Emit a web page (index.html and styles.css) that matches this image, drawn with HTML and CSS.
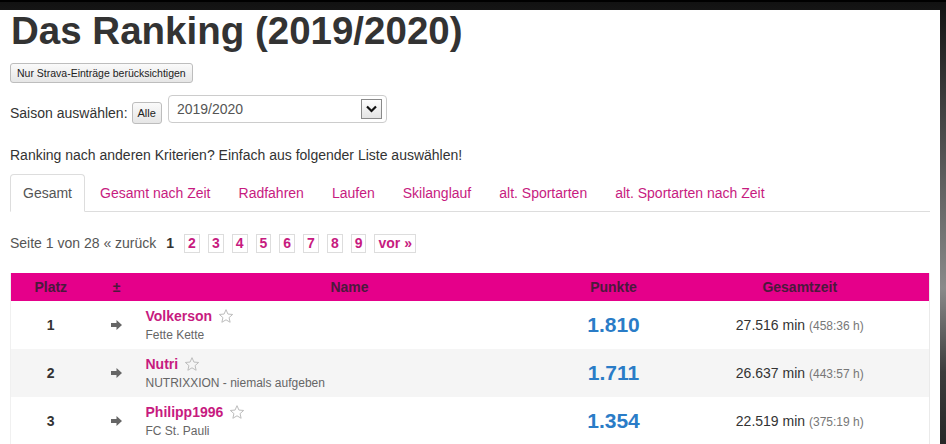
FILE: index.html
```html
<!DOCTYPE html>
<html>
<head>
    <title>Das Ranking (2019/2020)</title>
    <meta charset="utf-8">
    <link rel="stylesheet" href="styles.css">
</head>
<body>
    <div class="page">
        <h1>Das Ranking (2019/2020)</h1>

        <button class="btn-small btn-strava">Nur Strava-Einträge berücksichtigen</button>

        <!-- Saison-Auswahl -->
        <div class="season-row">
            <span class="season-label">Saison auswählen:</span>
            <button class="btn-small btn-alle">Alle</button>
            <div class="select">
                <span class="select-value">2019/2020</span>
                <span class="select-arrow">
                    <svg width="19" height="18" viewBox="0 0 19 18"><path d="M5 6.5 L9.5 11 L14 6.5" fill="none" stroke="#111" stroke-width="2.2"/></svg>
                </span>
            </div>
        </div>

        <p class="hint">Ranking nach anderen Kriterien? Einfach aus folgender Liste auswählen!</p>

        <!-- Tabs -->
        <ul class="tabs">
            <li class="active"><a href="#">Gesamt</a></li>
            <li><a href="#">Gesamt nach Zeit</a></li>
            <li><a href="#">Radfahren</a></li>
            <li><a href="#">Laufen</a></li>
            <li><a href="#">Skilanglauf</a></li>
            <li><a href="#">alt. Sportarten</a></li>
            <li><a href="#">alt. Sportarten nach Zeit</a></li>
        </ul>

        <!-- Seiten -->
        <div class="pager">
            <span class="pager-info">Seite 1 von 28 « zurück</span>
            <span class="pager-current">1</span>
            <a class="pager-link" href="#">2</a>
            <a class="pager-link" href="#">3</a>
            <a class="pager-link" href="#">4</a>
            <a class="pager-link" href="#">5</a>
            <a class="pager-link" href="#">6</a>
            <a class="pager-link" href="#">7</a>
            <a class="pager-link" href="#">8</a>
            <a class="pager-link" href="#">9</a>
            <a class="pager-link" href="#">vor »</a>
        </div>

        <!-- Rangliste -->
        <table class="ranking">
            <colgroup>
                <col class="col-platz">
                <col class="col-diff">
                <col class="col-name">
                <col class="col-punkte">
                <col>
            </colgroup>
            <thead>
                <tr>
                    <th>Platz</th>
                    <th>±</th>
                    <th>Name</th>
                    <th>Punkte</th>
                    <th>Gesamtzeit</th>
                </tr>
            </thead>
            <tbody>
                <tr>
                    <td class="rank">1</td>
                    <td class="diff"><svg class="arrow" width="11" height="10" viewBox="0 0 11 10"><path d="M0 3 H5.5 V0 L11 5 L5.5 10 V7 H0 Z" fill="#666"/></svg></td>
                    <td class="name">
                        <div class="name-line"><a href="#">Volkerson</a><svg class="star" width="16" height="16" viewBox="0 0 24 24"><path d="M12 2.5l2.9 6.6 7.1.6-5.4 4.7 1.6 7-6.2-3.7-6.2 3.7 1.6-7L2 9.7l7.1-.6z" fill="none" stroke="#bdbdbd" stroke-width="1.5" stroke-linejoin="round"/></svg></div>
                        <div class="team">Fette Kette</div>
                    </td>
                    <td class="points">1.810</td>
                    <td class="time">27.516 min <small>(458:36 h)</small></td>
                </tr>
                <tr>
                    <td class="rank">2</td>
                    <td class="diff"><svg class="arrow" width="11" height="10" viewBox="0 0 11 10"><path d="M0 3 H5.5 V0 L11 5 L5.5 10 V7 H0 Z" fill="#666"/></svg></td>
                    <td class="name">
                        <div class="name-line"><a href="#">Nutri</a><svg class="star" width="16" height="16" viewBox="0 0 24 24"><path d="M12 2.5l2.9 6.6 7.1.6-5.4 4.7 1.6 7-6.2-3.7-6.2 3.7 1.6-7L2 9.7l7.1-.6z" fill="none" stroke="#bdbdbd" stroke-width="1.5" stroke-linejoin="round"/></svg></div>
                        <div class="team">NUTRIXXION - niemals aufgeben</div>
                    </td>
                    <td class="points">1.711</td>
                    <td class="time">26.637 min <small>(443:57 h)</small></td>
                </tr>
                <tr>
                    <td class="rank">3</td>
                    <td class="diff"><svg class="arrow" width="11" height="10" viewBox="0 0 11 10"><path d="M0 3 H5.5 V0 L11 5 L5.5 10 V7 H0 Z" fill="#666"/></svg></td>
                    <td class="name">
                        <div class="name-line"><a href="#">Philipp1996</a><svg class="star" width="16" height="16" viewBox="0 0 24 24"><path d="M12 2.5l2.9 6.6 7.1.6-5.4 4.7 1.6 7-6.2-3.7-6.2 3.7 1.6-7L2 9.7l7.1-.6z" fill="none" stroke="#bdbdbd" stroke-width="1.5" stroke-linejoin="round"/></svg></div>
                        <div class="team">FC St. Pauli</div>
                    </td>
                    <td class="points">1.354</td>
                    <td class="time">22.519 min <small>(375:19 h)</small></td>
                </tr>
            </tbody>
        </table>
    </div>
</body>
</html>
```

FILE: styles.css
```css
/* Grundlayout */
body {
    margin: 0;
    font-family: "Liberation Sans", Arial, sans-serif;
    font-size: 14px;
    line-height: 20px;
    color: #333;
    background: linear-gradient(180deg, #111 0, #3a3a3a 20%, #6a6a6a 45%, #8a8a8a 62%, #3c3c3c 80%, #222 100%);
    border-top: 2px solid #000;
    min-height: 100vh;
    box-sizing: border-box;
}
.page {
    width: 940px;
    box-sizing: border-box;
    padding: 0 10px 20px;
    background: #fff;
    min-height: 442px;
}
h1 {
    margin: 8px 0 0 1px;
    font-size: 38.5px;
    line-height: 42px;
    font-weight: bold;
    color: #333;
}

/* Buttons */
.btn-small {
    display: block;
    margin-top: 11px;
    padding: 2px 6px;
    font-family: inherit;
    font-size: 11px;
    line-height: 14px;
    color: #222;
    background: linear-gradient(#fafafa, #e6e6e6);
    border: 1px solid #bdbdbd;
    border-radius: 3px;
}
.btn-strava {
    font-size: 10.5px;
}

/* Saison */
.season-row {
    display: flex;
    align-items: flex-end;
    margin-top: 12px;
    height: 29px;
}
.season-label {
    padding-bottom: 1px;
}
.btn-alle {
    margin: 0 0 0 4px;
    padding: 3px 5px;
}
.select {
    display: flex;
    align-items: center;
    justify-content: space-between;
    width: 219px;
    height: 28px;
    box-sizing: border-box;
    margin: 0 0 1px 6px;
    padding: 0 4px 0 8px;
    border: 1px solid #ccc;
    border-radius: 4px;
    color: #555;
}
.select-arrow {
    display: flex;
    width: 19px;
    height: 18px;
    border: 1px solid #8a8a8a;
    background: linear-gradient(#fdfdfd, #e4e4e4);
}

.hint {
    margin: 21px 0 0;
}

/* Tabs */
.tabs {
    display: flex;
    list-style: none;
    margin: 9px 0 0;
    padding: 0;
    border-bottom: 1px solid #ddd;
}
.tabs li {
    margin: 0 2px -1px 0;
}
.tabs a {
    display: block;
    padding: 8px 12px;
    border: 1px solid transparent;
    border-radius: 4px 4px 0 0;
    color: #c71b7f;
    text-decoration: none;
}
.tabs .active a {
    color: #555;
    background: #fff;
    border-color: #ddd #ddd transparent;
}

/* Seitennavigation */
.pager {
    display: flex;
    align-items: center;
    gap: 8px;
    margin-top: 22px;
    line-height: 17px;
}
.pager-info {
    color: #555;
}
.pager-current {
    padding: 0 2px;
    font-weight: bold;
}
.pager-link {
    padding: 0 3px;
    border: 1px solid #ddd;
    font-weight: bold;
    color: #c71b7f;
    text-decoration: none;
}

/* Tabelle */
.ranking {
    width: 920px;
    margin-top: 20px;
    border-collapse: collapse;
    table-layout: fixed;
    border-left: 1px solid #f0f0f0;
    border-right: 1px solid #eaeaea;
}
.col-platz { width: 80px; }
.col-diff { width: 52px; }
.col-name { width: 414px; }
.col-punkte { width: 114px; }
.ranking th {
    padding: 4px 8px;
    background: #e5008a;
    color: #4a1a3c;
    font-weight: bold;
    text-align: center;
}
.ranking td {
    height: 48px;
    box-sizing: border-box;
    padding: 5px 8px;
    vertical-align: middle;
    text-align: center;
}
.ranking tbody tr:nth-child(even) td {
    background: #f5f5f5;
}
.ranking .rank {
    font-weight: bold;
}
.arrow {
    display: block;
    margin: 0 auto;
}
.ranking .name {
    padding: 5px 3px;
    text-align: left;
}
.name-line {
    display: flex;
    align-items: center;
    gap: 6px;
}
.name-line a {
    font-weight: bold;
    color: #c71b7f;
    text-decoration: none;
}
.team {
    font-size: 12px;
    line-height: 18px;
    color: #666;
}
.ranking .points {
    font-size: 21px;
    font-weight: bold;
    color: #2a7cc7;
}
.time small {
    font-size: 12px;
    color: #777;
}
```
